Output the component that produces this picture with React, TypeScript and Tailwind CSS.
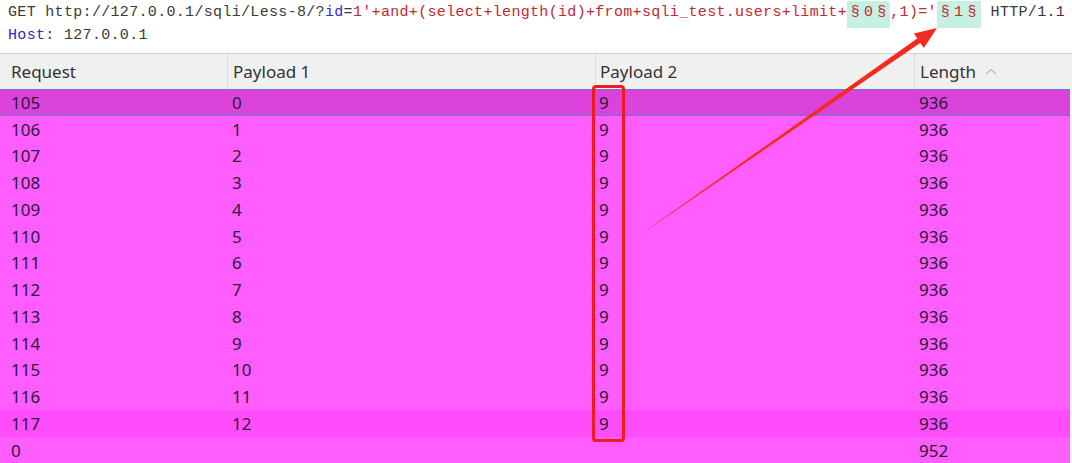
import React from "react";

const rows = [
  { r: "105", p1: "0", p2: "9", len: "936", kind: "sel" },
  { r: "106", p1: "1", p2: "9", len: "936", kind: "n" },
  { r: "107", p1: "2", p2: "9", len: "936", kind: "n" },
  { r: "108", p1: "3", p2: "9", len: "936", kind: "n" },
  { r: "109", p1: "4", p2: "9", len: "936", kind: "n" },
  { r: "110", p1: "5", p2: "9", len: "936", kind: "n" },
  { r: "111", p1: "6", p2: "9", len: "936", kind: "n" },
  { r: "112", p1: "7", p2: "9", len: "936", kind: "n" },
  { r: "113", p1: "8", p2: "9", len: "936", kind: "n" },
  { r: "114", p1: "9", p2: "9", len: "936", kind: "n" },
  { r: "115", p1: "10", p2: "9", len: "936", kind: "n" },
  { r: "116", p1: "11", p2: "9", len: "936", kind: "n" },
  { r: "117", p1: "12", p2: "9", len: "936", kind: "d" },
  { r: "0", p1: "", p2: "", len: "952", kind: "n" },
];

function Marker({ v, extra }: { v: string; extra?: boolean }) {
  return (
    <span className="bg-[#c6f0e1] pt-[3px] pb-[7px]">
      <span className="inline-block w-[17px] text-center">§</span>
      <span>{v}</span>
      <span className={"inline-block text-center " + (extra ? "w-[18px]" : "w-[17px]")}>§</span>
    </span>
  );
}

export default function App() {
  return (
    <div className="relative w-[1072px] h-[463px] bg-white overflow-hidden">
      <div
        className="pl-[8px] pt-[1px] text-[15px] leading-[23px] h-[53px] whitespace-pre tracking-[0.32px]"
        style={{ fontFamily: '"Liberation Mono", "DejaVu Sans Mono", monospace' }}
      >
        <div className="text-[#3a3a3a]">
          <span>GET http://127.0.0.1/sqli/Less-8/?</span>
          <span className="text-[#2b2bd6]">id</span>
          <span>=</span>
          <span className="text-[#c3272f]">1'+and+(select+length(id)+from+sqli_test.users+limit+</span>
          <span className="text-[#c3272f]"><Marker v="0" /></span>
          <span className="text-[#c3272f]">,1)='</span>
          <span className="text-[#c3272f]"><Marker v="1" extra /></span>
          <span> HTTP/1.1</span>
        </div>
        <div className="text-[#3a3a3a]">
          <span className="text-[#2b2bb0]">Host</span>
          <span>: 127.0.0.1</span>
        </div>
      </div>
      <div
        className="border-t border-[#c6d3e3] text-[17px]"
        style={{ fontFamily: '"Noto Sans", "Open Sans", sans-serif' }}
      >
        <div className="grid grid-cols-[227px_368px_319px_1fr] h-[35px] bg-[#f0f0f0] text-[#333333] items-stretch">
          <div className="pl-[11px] flex items-center">Request</div>
          <div className="pl-[5px] flex items-center border-l border-[#dcdcdc]">Payload 1</div>
          <div className="pl-[4px] flex items-center border-l border-[#dcdcdc]">Payload 2</div>
          <div className="pl-[5px] flex items-center border-l border-[#dcdcdc] gap-[8px]">
            <span>Length</span>
            <svg width="14" height="10" viewBox="0 0 14 10" className="mt-[1px]">
              <path d="M2 7 L7 2.5 L12 7" fill="none" stroke="#b8b8b8" strokeWidth="1.3" />
            </svg>
          </div>
        </div>
        <div className="text-[#2a1b3a]">
          {rows.map((row) => (
            <div
              key={row.r}
              className={
                "grid grid-cols-[227px_368px_319px_1fr] h-[26.75px] items-center leading-none mr-[2px] " +
                (row.kind === "sel"
                  ? "bg-[#dc43db] border-y border-[#5a7fc4]"
                  : row.kind === "d"
                  ? "bg-[#ff4dfc]"
                  : "bg-[#ff5dfe]")
              }
            >
              <div className="pl-[11px]">{row.r}</div>
              <div className="pl-[5px]">{row.p1}</div>
              <div className="pl-[4px]">{row.p2}</div>
              <div className="pl-[5px]">{row.len}</div>
            </div>
          ))}
        </div>
      </div>
      <div className="absolute left-[592px] top-[85px] w-[33px] h-[357px] border-[3px] border-[#f21a1a] rounded-[4px]" />
      <svg className="absolute left-0 top-0 pointer-events-none" width="1072" height="463" viewBox="0 0 1072 463">
        <polygon points="637,237 920.5,42.8 917.5,38.3" fill="#f42a1c" />
        <polygon points="937,28 923.8,48 913.9,33.4" fill="#f42a1c" />
      </svg>
    </div>
  );
}
